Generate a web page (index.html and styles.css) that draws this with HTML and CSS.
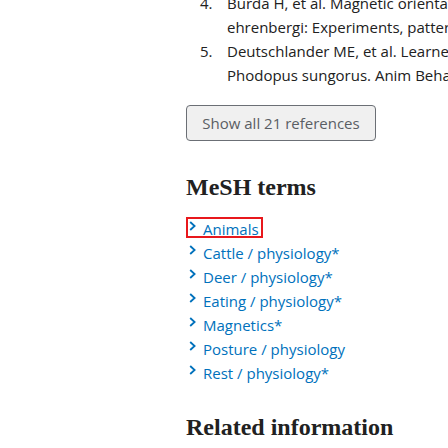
FILE: index.html
```html
<!DOCTYPE html>
<html lang="en">
<head>
<meta charset="utf-8">
<title>MeSH terms</title>
<link rel="stylesheet" href="styles.css">
</head>
<body>
<main class="page">
  <ol class="refs">
    <li><span class="num">4.</span><span class="cite">Burda H, et al. Magnetic orientation in the subterranean mole-rat Spalax<br>ehrenbergi: Experiments, patterns of nest building and sleeping.</span></li>
    <li><span class="num">5.</span><span class="cite">Deutschlander ME, et al. Learned magnetic compass orientation by the Siberian hamster,<br>Phodopus sungorus. Anim Behav. 2003.</span></li>
  </ol>
  <button class="show-all" type="button">Show all 21 references</button>

  <h2 class="heading mesh-heading">MeSH terms</h2>
  <ul class="mesh">
    <li><a class="term focused" href="#"><svg class="chev" viewBox="0 0 7 10" width="7" height="10"><polyline points="1.2,1 5.6,5 1.2,9" /></svg><span>Animals</span></a></li>
    <li><a class="term" href="#"><svg class="chev" viewBox="0 0 7 10" width="7" height="10"><polyline points="1.2,1 5.6,5 1.2,9" /></svg><span>Cattle / physiology*</span></a></li>
    <li><a class="term" href="#"><svg class="chev" viewBox="0 0 7 10" width="7" height="10"><polyline points="1.2,1 5.6,5 1.2,9" /></svg><span>Deer / physiology*</span></a></li>
    <li><a class="term" href="#"><svg class="chev" viewBox="0 0 7 10" width="7" height="10"><polyline points="1.2,1 5.6,5 1.2,9" /></svg><span>Eating / physiology*</span></a></li>
    <li><a class="term" href="#"><svg class="chev" viewBox="0 0 7 10" width="7" height="10"><polyline points="1.2,1 5.6,5 1.2,9" /></svg><span>Magnetics*</span></a></li>
    <li><a class="term" href="#"><svg class="chev" viewBox="0 0 7 10" width="7" height="10"><polyline points="1.2,1 5.6,5 1.2,9" /></svg><span>Posture / physiology</span></a></li>
    <li><a class="term" href="#"><svg class="chev" viewBox="0 0 7 10" width="7" height="10"><polyline points="1.2,1 5.6,5 1.2,9" /></svg><span>Rest / physiology*</span></a></li>
  </ul>

  <h2 class="heading related-heading">Related information</h2>
</main>
</body>
</html>
```

FILE: styles.css
```css
html, body {
  margin: 0;
  padding: 0;
  background: #ffffff;
  overflow: hidden;
  height: 448px;
}

.page {
  padding-left: 186px;
  font-family: "Open Sans", "Noto Sans", sans-serif;
  font-size: 15px;
  line-height: 24px;
  color: #212121;
  display: flex;
  flex-direction: column;
  align-items: flex-start;
}

.refs {
  list-style: none;
  margin: -9px 0 0 0;
  padding: 0;
  white-space: nowrap;
}

.refs li {
  display: flex;
}

.num {
  width: 27px;
  padding-left: 14px;
  flex: none;
}

.show-all {
  margin-top: 18px;
  width: 190px;
  height: 36px;
  box-sizing: border-box;
  border: 1px solid #6b6f75;
  border-radius: 4px;
  background: #f0f0f0;
  color: #5a5e64;
  font-family: "Open Sans", "Noto Sans", sans-serif;
  font-size: 15px;
  line-height: 24px;
  padding: 0;
  text-align: center;
}

.heading {
  font-family: "Liberation Serif", "Times New Roman", serif;
  font-weight: bold;
  font-size: 24px;
  line-height: 28.8px;
  color: #212121;
  margin: 0;
}

.mesh-heading {
  margin-top: 31.5px;
}

.mesh {
  list-style: none;
  margin: 12px 0 0 0;
  padding: 0;
}

.mesh li {
  height: 24px;
}

.term {
  display: inline-flex;
  align-items: flex-start;
  gap: 7px;
  height: 21px;
  box-sizing: border-box;
  padding: 0 4px 0 3px;
  color: #0071bc;
  text-decoration: none;
  line-height: 24px;
}

.term.focused {
  box-shadow: inset 0 0 0 2px #e8181c;
}

.chev {
  flex: none;
  margin-top: 4px;
  fill: none;
  stroke: #0071bc;
  stroke-width: 1.8;
}

.related-heading {
  margin-top: 31.5px;
}
```
